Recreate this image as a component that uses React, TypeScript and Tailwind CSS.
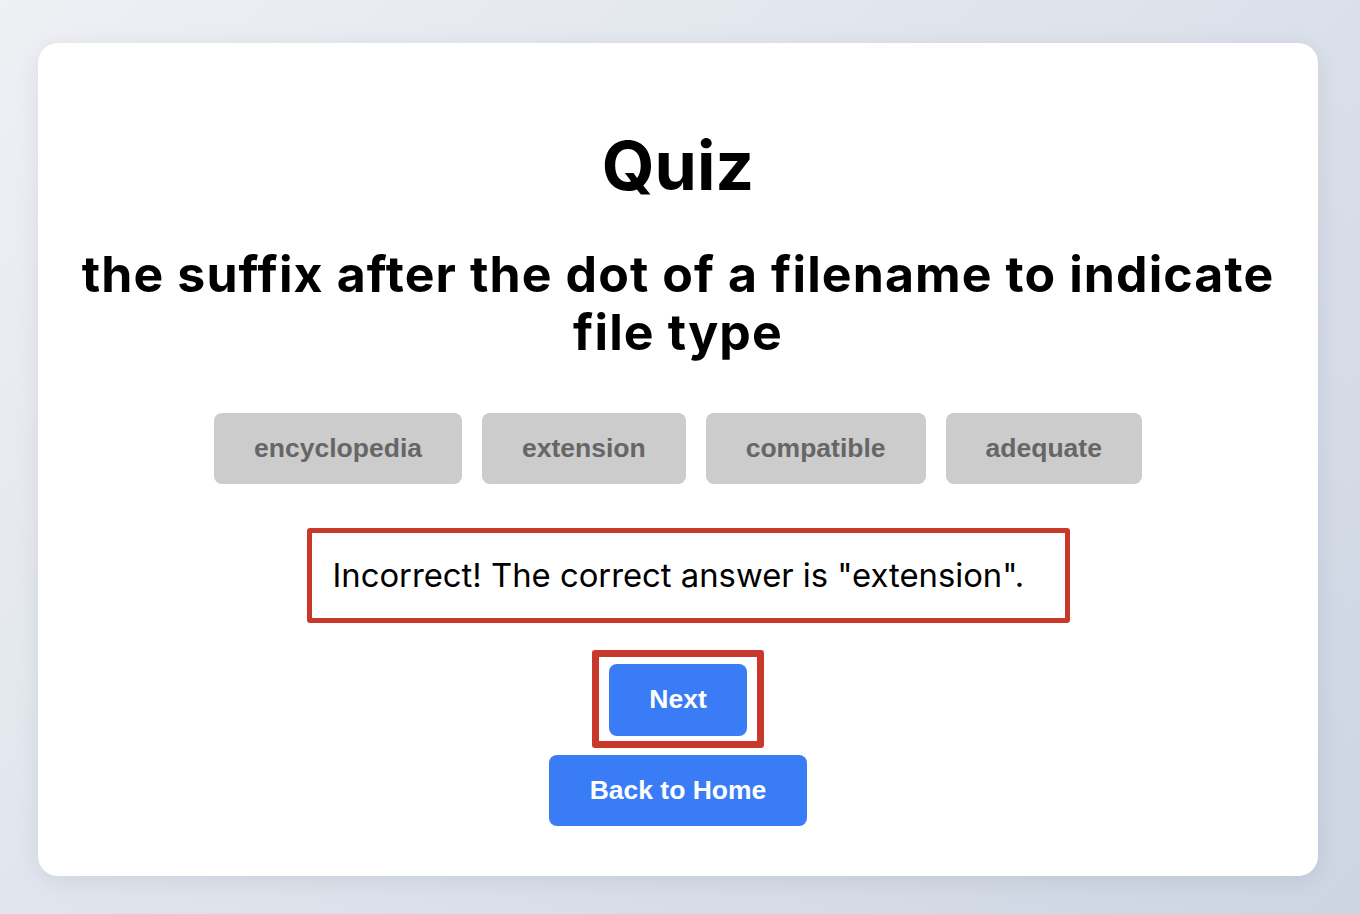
export default function App() {
  const options = ["encyclopedia", "extension", "compatible", "adequate"];

  return (
    <div className="h-screen w-full flex flex-col pl-[38px] pr-[42px] pt-[43px] pb-[38px] bg-[linear-gradient(135deg,#eef0f4_0%,#cdd5e3_100%)]">
      <div className="flex-1 flex flex-col items-center bg-white rounded-[20px] shadow-[0_4px_24px_rgba(0,0,0,0.08)] pt-[86px] font-['Inter',sans-serif] text-black">
        <h1 className="text-[68px] leading-[72px] font-bold">Quiz</h1>

        <h2 className="mt-[44px] px-[40px] text-center text-[50px] leading-[58px] font-bold tracking-[1.1px]">
          the suffix after the dot of a filename to indicate file type
        </h2>

        <div className="mt-[52px] flex gap-5">
          {options.map((opt) => (
            <button
              key={opt}
              className="h-[71px] px-10 rounded-lg bg-[#cccccc] text-[#666666] text-[26.5px] font-bold font-['Liberation_Sans',Arial,sans-serif]"
            >
              {opt}
            </button>
          ))}
        </div>

        <div className="mt-[44px] ml-[20px] w-[763px] h-[95px] flex items-center pl-[21px] border-[5px] border-[#c8392b] rounded-[3px]">
          <p className="text-[32.8px] font-normal">
            Incorrect! The correct answer is "extension".
          </p>
        </div>

        <div className="mt-[27px] pt-[7px] pb-[5px] px-[10px] border-[7px] border-[#c8392b] rounded-[3px]">
          <button className="w-[138px] h-[72px] rounded-lg bg-[#3a7cf6] text-white text-[26.5px] font-bold font-['Liberation_Sans',Arial,sans-serif]">
            Next
          </button>
        </div>

        <button className="mt-[7px] w-[258px] h-[71px] rounded-lg bg-[#3a7cf6] text-white text-[26.5px] font-bold font-['Liberation_Sans',Arial,sans-serif]">
          Back to Home
        </button>
      </div>
    </div>
  );
}
